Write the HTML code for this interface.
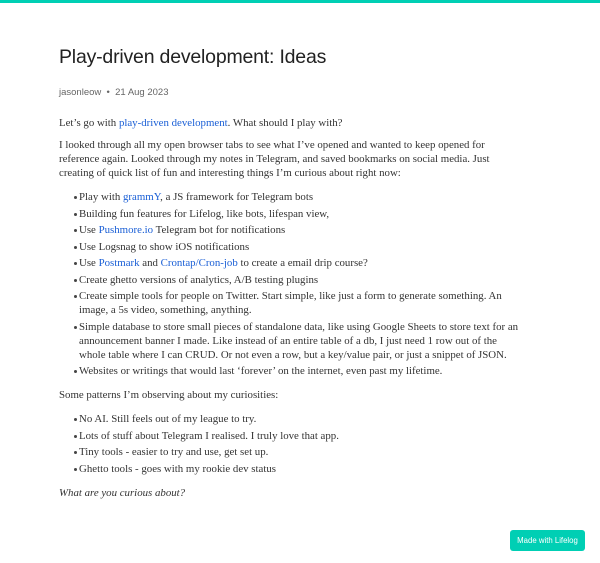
<!DOCTYPE html>
<html><head><meta charset="utf-8"><style>
html,body{margin:0;padding:0;background:#fff;width:600px;height:563px;overflow:hidden}
.bar{position:absolute;left:0;top:0;width:600px;height:3px;background:#00cfb4}
.wrap{position:absolute;left:59px;top:0;width:500px}
h1{position:absolute;top:44px;left:0;margin:0;font:19.5px/26px "Liberation Sans",sans-serif;color:#222;white-space:nowrap;letter-spacing:-0.2px}
.meta{position:absolute;top:86px;left:0;font:9.5px/14px "Liberation Sans",sans-serif;color:#666;white-space:nowrap}
.body{position:absolute;top:116px;left:0;font:10.85px/14px "Liberation Serif",serif;color:#333;white-space:nowrap}
p{margin:0 0 8px}
ul{margin:10px 0;padding-left:20px;list-style:none}
li{margin-bottom:2.5px;position:relative}
li::before{content:"";position:absolute;left:-5px;top:6px;width:3px;height:3px;border-radius:50%;background:#444}
a{color:#1a5fd6;text-decoration:none}
.btn{position:absolute;left:510px;top:530px;width:75px;height:21px;background:#00cfb4;border-radius:3px;color:#fff;font:7.8px/21px "Liberation Sans",sans-serif;text-align:center}
</style></head><body>
<div class="bar"></div>
<div class="wrap">
<h1>Play-driven development: Ideas</h1>
<div class="meta">jasonleow &nbsp;•&nbsp; 21 Aug 2023</div>
<div class="body">
<p>Let’s go with <a>play-driven development</a>. What should I play with?</p>
<p>I looked through all my open browser tabs to see what I’ve opened and wanted to keep opened for<br>reference again. Looked through my notes in Telegram, and saved bookmarks on social media. Just<br>creating of quick list of fun and interesting things I’m curious about right now:</p>
<ul>
<li>Play with <a>grammY</a>, a JS framework for Telegram bots</li>
<li>Building fun features for Lifelog, like bots, lifespan view,</li>
<li>Use <a>Pushmore.io</a> Telegram bot for notifications</li>
<li>Use Logsnag to show iOS notifications</li>
<li>Use <a>Postmark</a> and <a>Crontap/Cron-job</a> to create a email drip course?</li>
<li>Create ghetto versions of analytics, A/B testing plugins</li>
<li>Create simple tools for people on Twitter. Start simple, like just a form to generate something. An<br>image, a 5s video, something, anything.</li>
<li>Simple database to store small pieces of standalone data, like using Google Sheets to store text for an<br>announcement banner I made. Like instead of an entire table of a db, I just need 1 row out of the<br>whole table where I can CRUD. Or not even a row, but a key/value pair, or just a snippet of JSON.</li>
<li>Websites or writings that would last ‘forever’ on the internet, even past my lifetime.</li>
</ul>
<p>Some patterns I’m observing about my curiosities:</p>
<ul>
<li>No AI. Still feels out of my league to try.</li>
<li>Lots of stuff about Telegram I realised. I truly love that app.</li>
<li>Tiny tools - easier to try and use, get set up.</li>
<li>Ghetto tools - goes with my rookie dev status</li>
</ul>
<p><i>What are you curious about?</i></p>
</div>
</div>
<div class="btn">Made with Lifelog</div>
</body></html>
